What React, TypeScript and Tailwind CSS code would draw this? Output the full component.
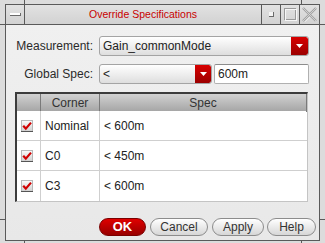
import React from 'react';

const font = { fontFamily: '"Liberation Sans", Arial, sans-serif' };

function Arrow() {
  return (
    <svg width="7" height="4" viewBox="0 0 7 4">
      <path d="M0 0 H7 L3.5 4 Z" fill="#ffffff" />
    </svg>
  );
}

function Dropdown({ value, width, btn }: { value: string; width: string; btn: string }) {
  return (
    <div className={`${width} h-[20px] flex rounded-[3px] border border-[#a4a4a4] bg-gradient-to-b from-[#ffffff] to-[#dedede] overflow-hidden`}>
      <div className="flex-1 flex items-center pl-[3px] text-[12px] text-[#222]">{value}</div>
      <div className={`${btn} flex items-center justify-center bg-gradient-to-b from-[#d80000] to-[#9c0000] rounded-r-[2px]`}>
        <Arrow />
      </div>
    </div>
  );
}

function Check() {
  return (
    <svg width="12" height="12" viewBox="0 0 12 12">
      <defs>
        <linearGradient id="cb" x1="0" y1="0" x2="0" y2="1">
          <stop offset="0" stopColor="#fafafa" />
          <stop offset="1" stopColor="#cfcfcf" />
        </linearGradient>
      </defs>
      <rect x="0.5" y="0.5" width="11" height="11" fill="url(#cb)" stroke="#b8b8b8" />
      <path d="M0 11.5 H12" stroke="#555" />
      <path d="M2.2 5.8 L4.8 8.6 L10 2.6" fill="none" stroke="#d00000" strokeWidth="2.2" />
    </svg>
  );
}

function Button({ label, w, primary }: { label: string; w: string; primary?: boolean }) {
  return primary ? (
    <div className={`${w} h-[18px] rounded-full border border-[#7a0000] bg-gradient-to-b from-[#e00000] to-[#980000] flex items-center justify-center text-white font-bold text-[13px]`}>
      {label}
    </div>
  ) : (
    <div className={`${w} h-[18px] rounded-full border border-[#8c8c8c] bg-gradient-to-b from-[#ffffff] to-[#d6d6d6] flex items-center justify-center text-[#333] text-[12px]`}>
      {label}
    </div>
  );
}

const rows = [
  { corner: 'Nominal', spec: '< 600m' },
  { corner: 'C0', spec: '< 450m' },
  { corner: 'C3', spec: '< 600m' },
];

export default function App() {
  return (
    <div className="w-[325px] h-[243px] bg-[#dcdcdc] flex flex-col" style={font}>
      {/* frame top */}
      <div className="h-[4px] flex">
        <div className="w-[24px]" />
        <div className="flex-1 border-l border-[#5a5a5a]" />
        <div className="w-[24px] border-l border-[#5a5a5a]" />
      </div>
      <div className="flex-1 flex">
        <div className="w-[5px] flex flex-col">
          <div className="h-[21px] border-b border-[#5a5a5a]" />
          <div className="flex-1" />
          <div className="h-[22px] border-t border-[#5a5a5a]" />
        </div>
        <div className="flex-1 flex flex-col border border-[#5a5a5a]">
          {/* title bar */}
          <div className="h-[20px] flex border-b border-[#5a5a5a] bg-gradient-to-b from-[#e2e2e2] to-[#d2d2d2]">
            <div className="w-[19px] border-r border-[#5a5a5a] flex items-center justify-center">
              <div className="w-[11px] h-[3px] bg-white border-b border-r border-[#6a6a6a]" />
            </div>
            <div className="flex-1 flex items-center justify-center text-[10.5px] text-[#c80000]">Override Specifications</div>
            <div className="w-[19px] border-l border-[#5a5a5a] flex items-center justify-center">
              <div className="w-[5px] h-[5px] bg-[#f4f4f4] border-b border-r border-[#6a6a6a]" />
            </div>
            <div className="w-[19px] border-l border-[#5a5a5a] flex items-center justify-center">
              <svg width="13" height="13" viewBox="0 0 13 13">
                <rect x="0.5" y="0.5" width="11" height="11" fill="none" stroke="#9a9a9a" />
                <rect x="1.5" y="1.5" width="11" height="11" fill="none" stroke="#f6f6f6" />
              </svg>
            </div>
            <div className="w-[20px] border-l border-[#5a5a5a] flex items-center justify-center">
              <svg width="15" height="15" viewBox="0 0 15 15">
                <path d="M2 1 L7.5 6.5 L13 1 M2 14 L7.5 8.5 L13 14" fill="none" stroke="#f8f8f8" strokeWidth="1" transform="translate(0.8 0.8)" />
                <path d="M1 1 L14 14 M14 1 L1 14" fill="none" stroke="#a0a0a0" strokeWidth="2.4" />
                <path d="M1 1 L14 14 M14 1 L1 14" fill="none" stroke="#dcdcdc" strokeWidth="0.8" />
              </svg>
            </div>
          </div>
          {/* body */}
          <div className="flex-1 bg-gradient-to-b from-[#f0f0f0] to-[#e8e8e8] flex flex-col text-[12px] text-[#2a2a2a]">
            <div className="mt-[11px] flex items-center">
              <div className="w-[87px] text-right">Measurement:</div>
              <div className="ml-[6px]">
                <Dropdown value="Gain_commonMode" width="w-[210px]" btn="w-[17px]" />
              </div>
            </div>
            <div className="mt-[8px] flex items-center">
              <div className="w-[87px] text-right">Global Spec:</div>
              <div className="ml-[6px]">
                <Dropdown value="<" width="w-[113px]" btn="w-[16px]" />
              </div>
              <div className="ml-[2px] w-[95px] h-[20px] rounded-[2px] border border-[#b0b0b0] border-t-[#8c8c8c] bg-white flex items-center pl-[3px] text-[#222]">
                600m
              </div>
            </div>
            {/* table */}
            <div className="mt-[8px] ml-[9px] w-[293px] border-t-2 border-l-2 border-[#3c3c3c] border-r border-b border-r-[#c4c4c4] border-b-[#c4c4c4] bg-white">
              <div className="h-[17px] grid grid-cols-[24px_59px_1fr] bg-gradient-to-b from-[#d2d2d2] to-[#a6a6a6] text-[#333]">
                <div className="border-r border-[#7a7a7a]" />
                <div className="border-r border-[#7a7a7a] flex items-center justify-center">Corner</div>
                <div className="border-r border-[#7a7a7a] flex items-center justify-center">Spec</div>
              </div>
              {rows.map((r, i) => (
                <div key={r.corner} className={`h-[30px] grid grid-cols-[24px_59px_1fr] ${i < 2 ? 'border-b border-[#cfcfcf]' : ''}`}>
                  <div className="border-r border-[#cfcfcf] flex items-center pl-[4px]">
                    <Check />
                  </div>
                  <div className="border-r border-[#cfcfcf] flex items-center pl-[4px] text-[#222]">{r.corner}</div>
                  <div className="flex items-center pl-[4px] text-[#222]">{r.spec}</div>
                </div>
              ))}
            </div>
            {/* buttons */}
            <div className="mt-[16px] flex justify-end pr-[3px]">
              <Button label="OK" w="w-[47px]" primary />
              <div className="ml-[4px]"><Button label="Cancel" w="w-[58px]" /></div>
              <div className="ml-[4px]"><Button label="Apply" w="w-[52px]" /></div>
              <div className="ml-[3px]"><Button label="Help" w="w-[49px]" /></div>
            </div>
          </div>
        </div>
        <div className="w-[5px] flex flex-col">
          <div className="h-[21px] border-b border-[#5a5a5a]" />
          <div className="flex-1" />
          <div className="h-[22px] border-t border-[#5a5a5a]" />
        </div>
      </div>
      {/* frame bottom */}
      <div className="h-[2px] flex">
        <div className="w-[24px]" />
        <div className="flex-1 border-l border-[#5a5a5a]" />
        <div className="w-[24px] border-l border-[#5a5a5a]" />
      </div>
    </div>
  );
}
